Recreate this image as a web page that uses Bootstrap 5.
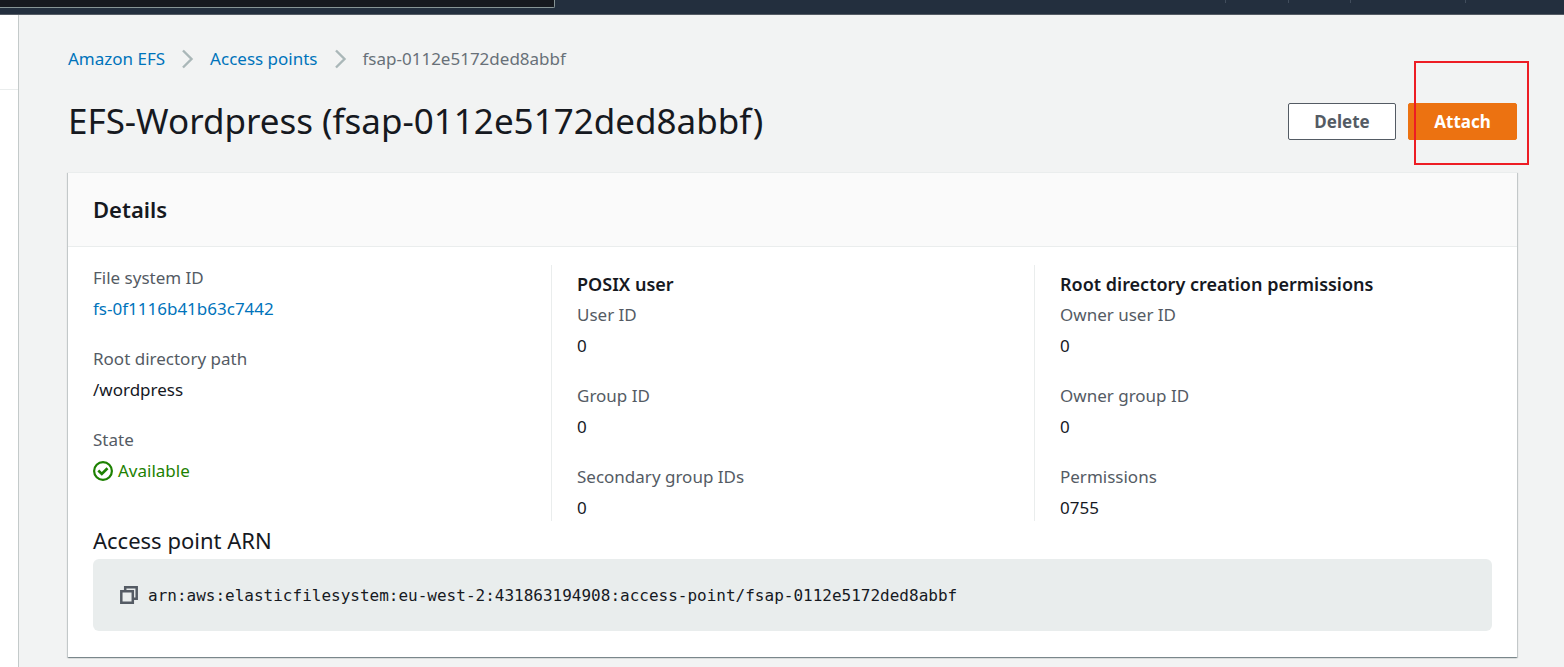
<!DOCTYPE html>
<html lang="en">
<head>
<meta charset="utf-8">
<meta name="viewport" content="width=device-width, initial-scale=1">
<title>EFS-Wordpress - Amazon EFS</title>
<link rel="stylesheet" href="https://cdn.jsdelivr.net/npm/bootstrap@5.3.0/dist/css/bootstrap.min.css">
<style>
  body { font-family: "Noto Sans", "Open Sans", sans-serif; font-size: 17px; line-height: 25px; color: #16191f; background: #f2f3f3; }
  a { color: #0073bb; text-decoration: none; }
  .top-nav { height: 15px; background: #232f3e; border-bottom: 1px solid #545b64; }
  .top-search { width: 555px; height: 8px; background: #16191f; border: 1px solid #879596; border-width: 0 1px 1px 0; border-radius: 0 0 2px 0; padding: 0; }
  .top-links { height: 3px; margin-right: 98px; }
  .top-links span { border-left: 1px solid #414d5c; }
  .w-a { width: 63px; } .w-b { width: 62px; } .w-c { width: 115px; }
  .side-strip { width: 19px; background: #fff; border-right: 1px solid #c4caca; }
  .side-head { height: 75px; border-bottom: 1px solid #eaeded; }
  .main-area { padding: 31px 47px 9px 49px; }
  .crumbs { gap: 16px; }
  .crumbs .here { color: #687078; }
  .page-title { font-size: 35px; line-height: 44px; font-weight: 400; }
  .title-row { margin: 28px 0 29px; }
  .actions { gap: 12px; }
  .act { height: 37px; min-width: 108px; padding: 0 16px; border-radius: 2px; font-size: 17px; font-weight: 700; line-height: 33px; }
  .act-plain { color: #545b64; background: #fff; border: 1px solid #545b64; }
  .act-main { min-width: 109px; color: #fff; background: #ec7211; border: 1px solid #ec7211; }
  .callout { position: absolute; inset: -42px -12px -25px 6px; border: 2px solid #ed1c24; pointer-events: none; }
  .panel { background: #fff; box-shadow: 0 1px 1px 0 rgba(0,28,36,.3), 1px 1px 1px 0 rgba(0,28,36,.15), -1px 1px 1px 0 rgba(0,28,36,.15); border-top: 1px solid #eaeded; }
  .panel-head { padding: 20px 25px 21px; background: #fafafa; border-bottom: 1px solid #eaeded; }
  .panel-head h2 { font-size: 22px; line-height: 32px; font-weight: 600; }
  .panel-body { padding: 18px 0 26px; }
  .cell { padding: 0 25px; }
  .cell + .cell { border-left: 1px solid #eaeded; }
  .cell h3 { font-size: 18px; line-height: 25px; font-weight: 600; margin: 7px 0 5px; }
  .cell dl { display: grid; gap: 25px; margin: 0 0 1px; }
  .cell dt { font-weight: 400; color: #545b64; margin-bottom: 6px; }
  .cell dd { margin: 0; }
  .ok { color: #1d8102; gap: 5px; }
  .arn { padding: 4px 25px 0; }
  .arn h3 { font-size: 22px; line-height: 30px; font-weight: 400; margin: 0 0 4px; }
  .arn-box { height: 72px; padding: 0 27px; gap: 10px; border-radius: 6px; background: #e9eded; }
  .arn-box code { font-family: "DejaVu Sans Mono", monospace; font-size: 16px; color: #16191f; }
</style>
</head>
<body class="min-vh-100 d-flex flex-column">
<header class="top-nav d-flex justify-content-between align-items-start">
  <input class="top-search" type="text" aria-label="Search">
  <div class="top-links d-flex"><span class="w-a"></span><span class="w-b"></span><span class="w-c"></span><span></span></div>
</header>
<div class="d-flex flex-grow-1">
  <aside class="side-strip flex-shrink-0"><div class="side-head"></div></aside>
  <main class="main-area flex-grow-1">
    <nav class="crumbs d-flex align-items-center" aria-label="Breadcrumb">
      <a href="#">Amazon EFS</a>
      <svg width="13" height="20" viewBox="0 0 13 20" fill="none" stroke="#aab7b8" stroke-width="2.4" aria-hidden="true"><path d="M2 1.500 10.500 10 2 18.500"/></svg>
      <a href="#">Access points</a>
      <svg width="13" height="20" viewBox="0 0 13 20" fill="none" stroke="#aab7b8" stroke-width="2.4" aria-hidden="true"><path d="M2 1.500 10.500 10 2 18.500"/></svg>
      <span class="here">fsap-0112e5172ded8abbf</span>
    </nav>
    <div class="title-row d-flex justify-content-between align-items-center">
      <h1 class="page-title m-0">EFS-Wordpress (fsap-0112e5172ded8abbf)</h1>
      <div class="actions d-flex">
        <button type="button" class="act act-plain">Delete</button>
        <div class="position-relative">
          <button type="button" class="act act-main">Attach</button>
          <div class="callout"></div>
        </div>
      </div>
    </div>
    <section class="panel">
      <div class="panel-head"><h2 class="m-0">Details</h2></div>
      <div class="panel-body">
        <div class="row g-0">
          <div class="col-4 cell">
            <dl>
              <div><dt>File system ID</dt><dd><a href="#">fs-0f1116b41b63c7442</a></dd></div>
              <div><dt>Root directory path</dt><dd>/wordpress</dd></div>
              <div><dt>State</dt><dd class="ok d-flex align-items-center">
                <svg width="20" height="20" viewBox="0 0 20 20" fill="none" stroke="#1d8102" aria-hidden="true"><circle cx="10" cy="10" r="8.900" stroke-width="2.200"/><path d="M5.300 9.600 8.800 12.900 14.500 7.300" stroke-width="2.700"/></svg>
                <span>Available</span></dd></div>
            </dl>
          </div>
          <div class="col-4 cell">
            <h3>POSIX user</h3>
            <dl>
              <div><dt>User ID</dt><dd>0</dd></div>
              <div><dt>Group ID</dt><dd>0</dd></div>
              <div><dt>Secondary group IDs</dt><dd>0</dd></div>
            </dl>
          </div>
          <div class="col-4 cell">
            <h3>Root directory creation permissions</h3>
            <dl>
              <div><dt>Owner user ID</dt><dd>0</dd></div>
              <div><dt>Owner group ID</dt><dd>0</dd></div>
              <div><dt>Permissions</dt><dd>0755</dd></div>
            </dl>
          </div>
        </div>
        <div class="arn">
          <h3>Access point ARN</h3>
          <div class="arn-box d-flex align-items-center">
            <button type="button" class="border-0 bg-transparent p-0 d-flex" aria-label="Copy ARN">
              <svg width="18" height="18" viewBox="0 0 18 18" fill="none" stroke="#545b64" stroke-width="2.500" aria-hidden="true"><path d="M1.300 5.200H12.800V16.700H1.300ZM5.200 5V1.300H16.700V12.800H13"/></svg>
            </button>
            <code>arn:aws:elasticfilesystem:eu-west-2:431863194908:access-point/fsap-0112e5172ded8abbf</code>
          </div>
        </div>
      </div>
    </section>
  </main>
</div>
<script src="https://cdn.jsdelivr.net/npm/bootstrap@5.3.0/dist/js/bootstrap.bundle.min.js"></script>
</body>
</html>
